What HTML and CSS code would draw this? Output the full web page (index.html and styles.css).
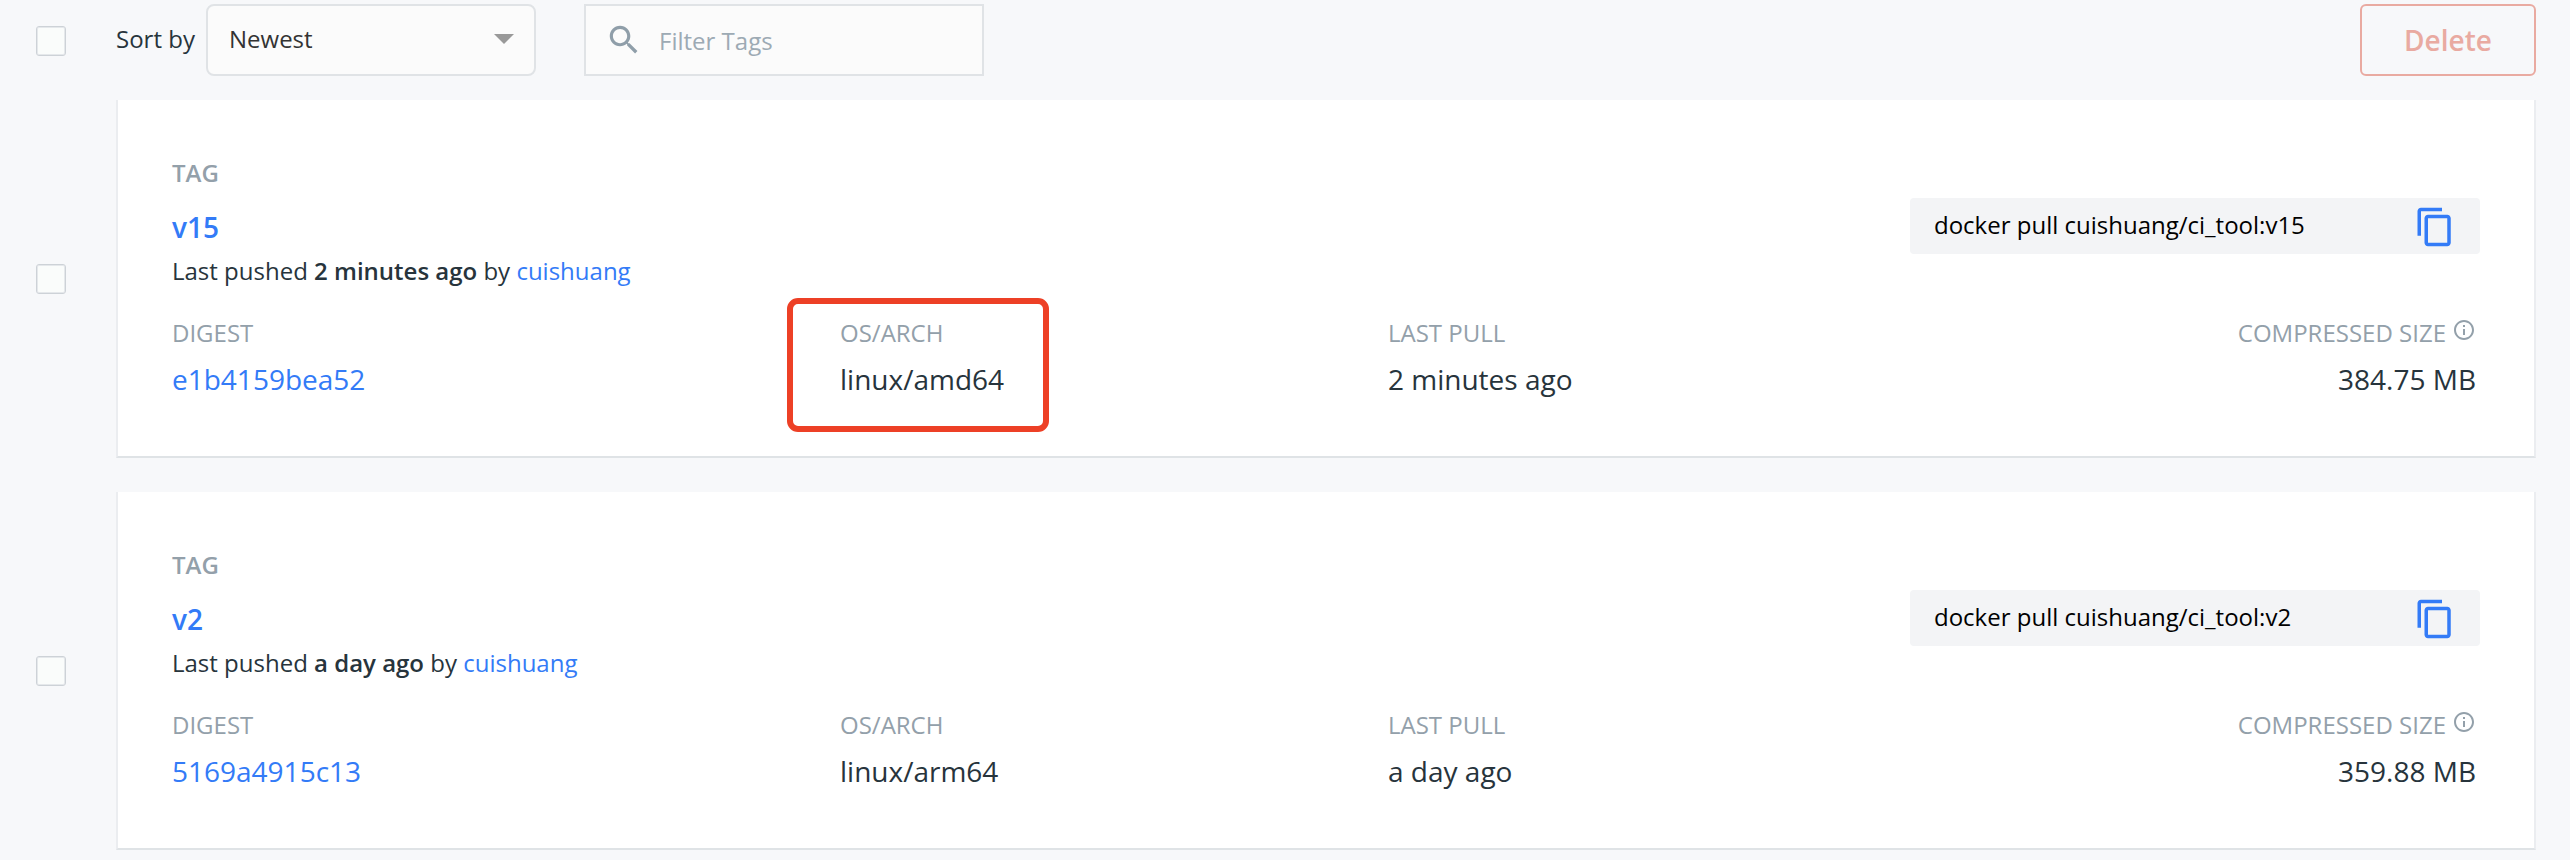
FILE: index.html
```html
<!DOCTYPE html>
<html lang="en">
<head>
<meta charset="utf-8">
<title>Tags</title>
<link rel="stylesheet" href="styles.css">
</head>
<body>
<svg class="sprite" aria-hidden="true">
  <symbol id="copy" viewBox="0 0 24 24"><path d="M16 1H4c-1.1 0-2 .9-2 2v14h2V3h12V1zm3 4H8c-1.1 0-2 .9-2 2v14c0 1.1.9 2 2 2h11c1.1 0 2-.9 2-2V7c0-1.1-.9-2-2-2zm0 16H8V7h11v14z"/></symbol>
  <symbol id="info" viewBox="0 0 24 24"><path d="M11 7h2v2h-2zm0 4h2v6h-2zm1-9C6.48 2 2 6.48 2 12s4.480 10 10 10 10-4.480 10-10S17.520 2 12 2zm0 18c-4.410 0-8-3.590-8-8s3.590-8 8-8 8 3.590 8 8-3.590 8-8 8z"/></symbol>
  <symbol id="search" viewBox="0 0 24 24"><path d="M15.500 14h-.79l-.28-.27C15.410 12.590 16 11.110 16 9.500 16 5.910 13.090 3 9.500 3S3 5.910 3 9.500 5.910 16 9.500 16c1.610 0 3.090-.59 4.230-1.570l.27.28v.79l5 4.990L20.490 19l-4.990-5zm-6 0C7.010 14 5 11.990 5 9.500S7.010 5 9.500 5 14 7.010 14 9.500 11.990 14 9.500 14z"/></symbol>
</svg>
<header class="toolbar">
  <span class="checkbox"></span>
  <span class="sort-label">Sort by</span>
  <div class="select"><span>Newest</span><i class="caret"></i></div>
  <div class="filter"><svg class="search-icon"><use href="#search"/></svg><span>Filter Tags</span></div>
  <button class="delete">Delete</button>
</header>
<main class="tags">
  <section class="row">
    <span class="checkbox"></span>
    <article class="card">
      <div class="head">
        <div>
          <div class="label strong">TAG</div>
          <a class="tag-name">v15</a>
          <p class="pushed">Last pushed <b>2 minutes ago</b> by <a>cuishuang</a></p>
        </div>
        <div class="command"><span>docker pull cuishuang/ci_tool:v15</span><svg class="copy-icon"><use href="#copy"/></svg></div>
      </div>
      <div class="details">
        <div><div class="label">DIGEST</div><a class="value">e1b4159bea52</a></div>
        <div class="arch"><div class="label">OS/ARCH</div><div class="value">linux/amd64</div><span class="highlight"></span></div>
        <div><div class="label">LAST PULL</div><div class="value">2 minutes ago</div></div>
        <div class="size"><div class="label">COMPRESSED SIZE<svg class="info-icon"><use href="#info"/></svg></div><div class="value">384.75 MB</div></div>
      </div>
    </article>
  </section>
  <section class="row">
    <span class="checkbox"></span>
    <article class="card">
      <div class="head">
        <div>
          <div class="label strong">TAG</div>
          <a class="tag-name">v2</a>
          <p class="pushed">Last pushed <b>a day ago</b> by <a>cuishuang</a></p>
        </div>
        <div class="command"><span>docker pull cuishuang/ci_tool:v2</span><svg class="copy-icon"><use href="#copy"/></svg></div>
      </div>
      <div class="details">
        <div><div class="label">DIGEST</div><a class="value">5169a4915c13</a></div>
        <div class="arch"><div class="label">OS/ARCH</div><div class="value">linux/arm64</div></div>
        <div><div class="label">LAST PULL</div><div class="value">a day ago</div></div>
        <div class="size"><div class="label">COMPRESSED SIZE<svg class="info-icon"><use href="#info"/></svg></div><div class="value">359.88 MB</div></div>
      </div>
    </article>
  </section>
</main>
</body>
</html>
```
FILE: styles.css
```css
* { box-sizing: border-box; }
body {
  margin: 0;
  height: 860px;
  overflow: hidden;
  background: #f7f8fa;
  color: #27343c;
  font: 24px/33px "Open Sans", sans-serif;
}
svg { display: block; fill: currentColor; flex: none; }
a { color: #337bf7; }
.sprite { display: none; }
.checkbox {
  flex: none;
  width: 30px;
  height: 30px;
  margin: 0 50px 0 36px;
  border: 1px solid #cdd2d7;
  border-radius: 3px;
  background: #fafcfb;
  box-shadow: inset 0 0 0 1px #e5e8eb;
}
.toolbar {
  display: flex;
  height: 100px;
  padding: 4px 34px 24px 0;
}
.toolbar .checkbox { margin-top: 22px; }
.sort-label { width: 90px; padding-top: 18px; }
.select, .filter {
  display: flex;
  height: 72px;
  border: 2px solid #e0e3e6;
  background: #fbfbfb;
}
.select {
  width: 330px;
  padding: 16px 20px 0 21px;
  border-radius: 8px;
  color: #333;
  justify-content: space-between;
}
.caret {
  height: 10px;
  margin-top: 12px;
  border: 10px solid transparent;
  border-top-color: #999;
  border-bottom: 0;
}
.filter {
  width: 400px;
  margin-left: 48px;
  padding: 18px 0 0 19px;
  color: #9daab4;
}
.search-icon {
  width: 38px;
  height: 38px;
  margin: -3px 16px 0 0;
  color: #8f9ea9;
}
.delete {
  width: 176px;
  height: 72px;
  margin-left: auto;
  padding: 0;
  border: 2px solid #e9aaa1;
  border-radius: 6px;
  background: transparent;
  color: #e9aaa1;
  font: 600 28px/38px "Open Sans", sans-serif;
}
.tags { display: grid; gap: 34px; }
.row { display: flex; align-items: center; padding-right: 34px; }
.card {
  flex: 1;
  height: 358px;
  padding: 56px 58px 0 54px;
  border: 2px solid #ebedf0;
  border-top: 0;
  border-bottom-color: #dfe3e6;
  background: #fff;
}
.head { display: flex; justify-content: space-between; height: 160px; }
.label { color: #93a0aa; }
.strong { margin-bottom: 19px; font-weight: 600; }
.tag-name { display: block; font-size: 28px; line-height: 38px; font-weight: 600; }
.pushed { margin: 8px 0 0; }
.pushed b { font-weight: 600; }
.command {
  display: flex;
  justify-content: space-between;
  width: 570px;
  height: 56px;
  margin: 42px -4px 0 0;
  padding: 10px 24px 0 24px;
  border-radius: 4px;
  background: #f3f4f6;
  color: #000;
}
.copy-icon { width: 42px; height: 42px; margin-top: -2px; color: #337bf7; }
.details { display: grid; grid-template-columns: 668px 548px 1fr 400px; }
.arch { position: relative; }
.value { display: block; margin-top: 11px; font-size: 28px; line-height: 38px; }
.size { text-align: right; }
.size .label { display: flex; justify-content: flex-end; gap: 6px; }
.info-icon { width: 24px; height: 24px; margin-top: 2px; }
.highlight {
  position: absolute;
  left: -53px;
  top: -18px;
  width: 262px;
  height: 134px;
  border: 6px solid #ed4026;
  border-radius: 11px;
}
```
